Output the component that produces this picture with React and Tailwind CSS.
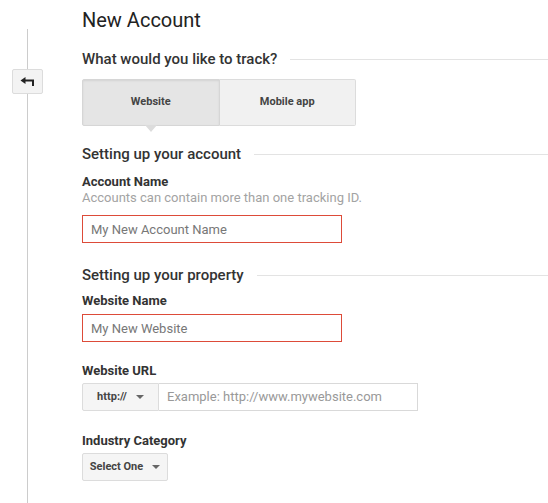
import { useState } from 'react';

function BackArrow() {
  return (
    <svg width="15" height="9" viewBox="0 0 15 9" fill="none">
      <path d="M0.5 3.5 L5.5 0 L5.5 7 Z" fill="#222" />
      <path d="M5 3.5 H13 V9" stroke="#222" strokeWidth="2" />
    </svg>
  );
}

function Caret() {
  return (
    <svg width="8" height="4" viewBox="0 0 8 4">
      <path d="M0 0 H8 L4 4 Z" fill="#666" />
    </svg>
  );
}

function SectionTitle({ children }) {
  return (
    <div className="flex items-center gap-[13px]">
      <h2 className="text-[15px] leading-5 font-medium text-[#333] whitespace-nowrap">
        {children}
      </h2>
      <div className="h-px flex-1 bg-[#e3e3e3]" />
    </div>
  );
}

function Label({ children }) {
  return <div className="text-[13px] leading-4 font-bold text-[#333]">{children}</div>;
}

export default function App() {
  const [target, setTarget] = useState('web');
  const [accountName, setAccountName] = useState('');
  const [siteName, setSiteName] = useState('');
  const [siteUrl, setSiteUrl] = useState('');

  return (
    <div className="flex min-h-[503px] bg-white font-['Roboto',sans-serif]">
      <div className="w-[54px] shrink-0 flex flex-col items-center pt-[29px]">
        <div className="w-px h-[40px] bg-[#ccc]" />
        <button className="w-[31px] h-[25px] flex items-center justify-center bg-[#f3f3f3] border border-[#dcdcdc] rounded-[2px]">
          <BackArrow />
        </button>
        <div className="w-px flex-1 bg-[#ccc]" />
      </div>

      <main className="flex-1 pl-[28px] pt-[6px]">
        <h1 className="text-[20px] leading-7 text-[#222]">New Account</h1>

        <div className="mt-[15px]">
          <SectionTitle>What would you like to track?</SectionTitle>
        </div>

        <div className="mt-[10px] flex w-[274px] h-[47px]">
          <button
            onClick={() => setTarget('web')}
            className={
              'relative flex-1 text-[11px] font-bold text-[#444] border border-[#d6d6d6] rounded-l-[2px] ' +
              (target === 'web' ? 'bg-[#e5e5e5] shadow-[inset_0_1px_2px_rgba(0,0,0,0.08)]' : 'bg-[#f1f1f1]')
            }
          >
            Website
            {target === 'web' && (
              <span className="absolute left-1/2 -translate-x-1/2 top-full border-x-[6px] border-x-transparent border-t-[7px] border-t-[#dcdcdc]" />
            )}
          </button>
          <button
            onClick={() => setTarget('app')}
            className={
              'relative flex-1 text-[11px] font-bold text-[#444] border border-l-0 border-[#dcdcdc] rounded-r-[2px] ' +
              (target === 'app' ? 'bg-[#e5e5e5]' : 'bg-[#f1f1f1]')
            }
          >
            Mobile app
            {target === 'app' && (
              <span className="absolute left-1/2 -translate-x-1/2 top-full border-x-[6px] border-x-transparent border-t-[7px] border-t-[#dcdcdc]" />
            )}
          </button>
        </div>

        <div className="mt-[18px]">
          <SectionTitle>Setting up your account</SectionTitle>
        </div>

        <div className="mt-[10px]">
          <Label>Account Name</Label>
          <div className="text-[13px] leading-4 text-[#a3a3a3]">Accounts can contain more than one tracking ID.</div>
          <input
            value={accountName}
            onChange={(e) => setAccountName(e.target.value)}
            placeholder="My New Account Name"
            className="mt-[9px] block w-[260px] h-[28px] px-[8px] border border-[#dd4b39] text-[13px] text-[#333] placeholder:text-[#777] outline-none"
          />
        </div>

        <div className="mt-[22px]">
          <SectionTitle>Setting up your property</SectionTitle>
        </div>

        <div className="mt-[8px]">
          <Label>Website Name</Label>
          <input
            value={siteName}
            onChange={(e) => setSiteName(e.target.value)}
            placeholder="My New Website"
            className="mt-[5px] block w-[260px] h-[28px] px-[8px] border border-[#dd4b39] text-[13px] text-[#333] placeholder:text-[#777] outline-none"
          />
        </div>

        <div className="mt-[21px]">
          <Label>Website URL</Label>
          <div className="mt-[4px] flex h-[28px]">
            <button className="w-[77px] flex items-center justify-center gap-[9px] bg-[#f5f5f5] border border-[#dcdcdc] rounded-l-[2px] text-[11px] font-bold text-[#444]">
              http://
              <Caret />
            </button>
            <input
              value={siteUrl}
              onChange={(e) => setSiteUrl(e.target.value)}
              placeholder="Example: http://www.mywebsite.com"
              className="w-[259px] px-[8px] border border-l-0 border-[#d9d9d9] text-[13px] text-[#333] placeholder:text-[#999] outline-none"
            />
          </div>
        </div>

        <div className="mt-[22px]">
          <Label>Industry Category</Label>
          <button className="mt-[4px] w-[86px] h-[28px] flex items-center justify-center gap-[9px] bg-[#f5f5f5] border border-[#dcdcdc] rounded-[2px] text-[11px] font-bold text-[#444]">
            Select One
            <Caret />
          </button>
        </div>
      </main>
    </div>
  );
}
